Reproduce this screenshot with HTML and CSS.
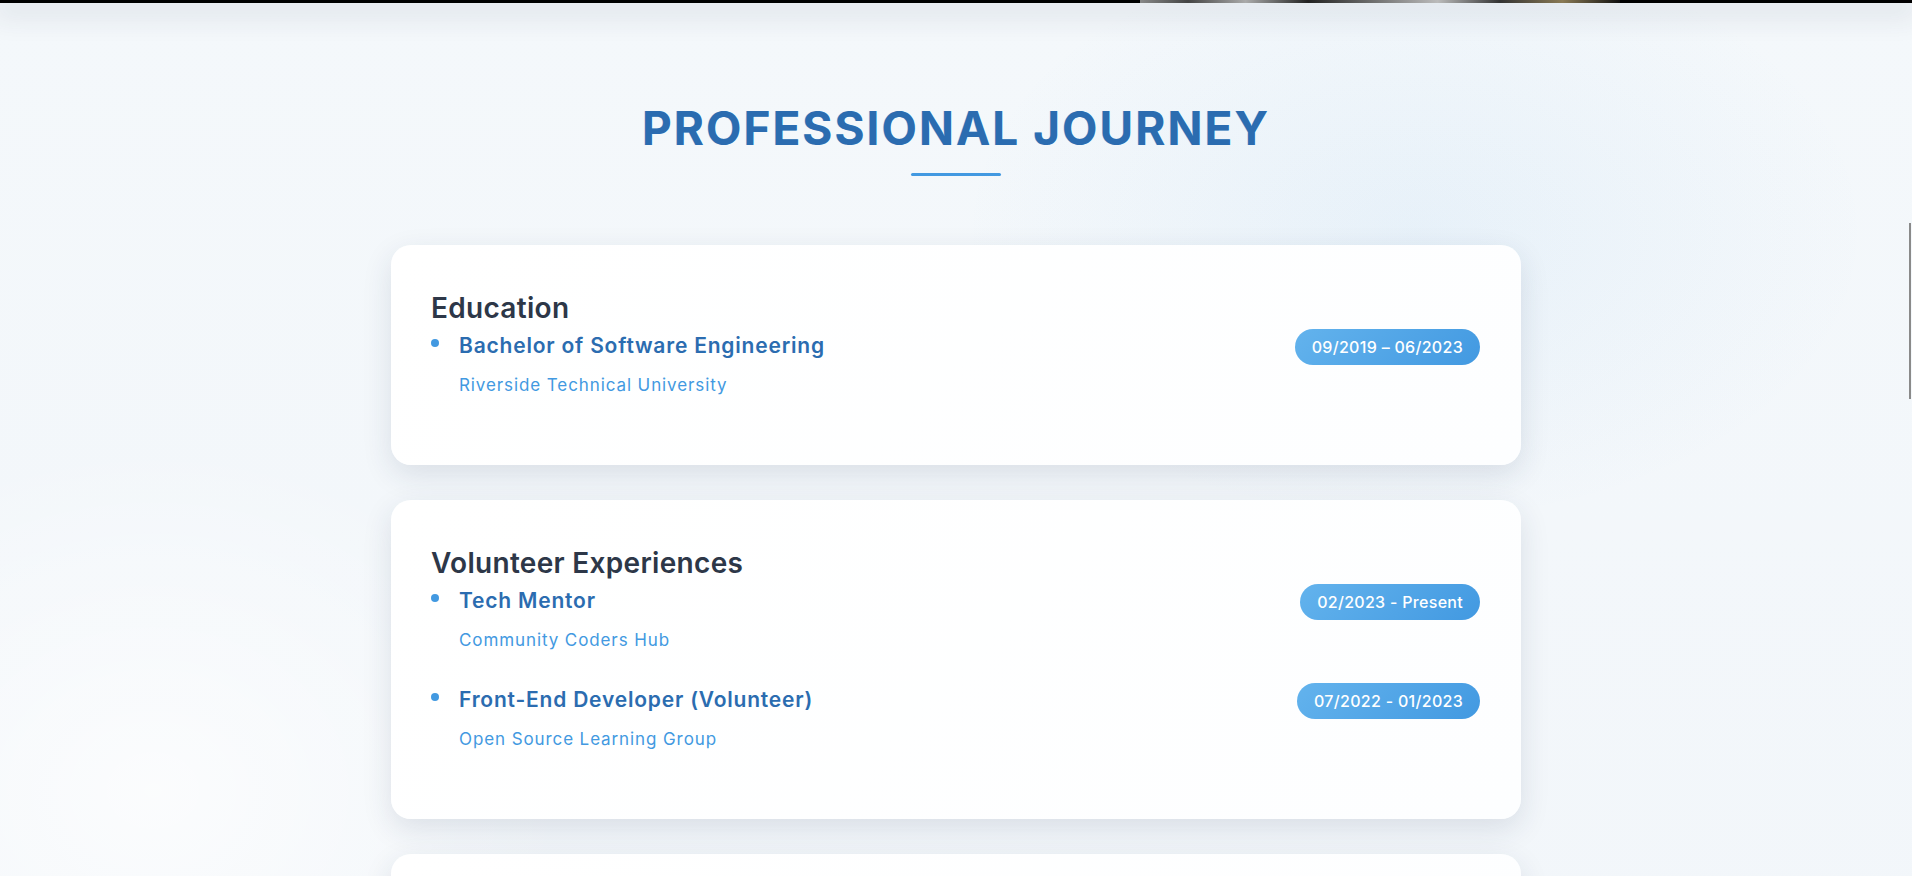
FILE: index.html
```html
<!DOCTYPE html>
<html lang="en">
<head>
<meta charset="utf-8">
<title>Professional Journey</title>
<link rel="stylesheet" href="styles.css">
</head>
<body>
<div class="hero-edge">
  <div class="hero-photo"></div>
</div>
<section class="journey">
  <h2 class="journey-title">PROFESSIONAL JOURNEY</h2>
  <div class="journey-rule"></div>

  <div class="card">
    <h3 class="card-title">Education</h3>
    <div class="item">
      <span class="bullet"></span>
      <div class="item-text">
        <div class="item-name">Bachelor of Software Engineering</div>
        <div class="item-org">Riverside Technical University</div>
      </div>
      <span class="badge">09/2019 – 06/2023</span>
    </div>
  </div>

  <div class="card">
    <h3 class="card-title">Volunteer Experiences</h3>
    <div class="item">
      <span class="bullet"></span>
      <div class="item-text">
        <div class="item-name">Tech Mentor</div>
        <div class="item-org">Community Coders Hub</div>
      </div>
      <span class="badge">02/2023 - Present</span>
    </div>
    <div class="item">
      <span class="bullet"></span>
      <div class="item-text">
        <div class="item-name">Front-End Developer (Volunteer)</div>
        <div class="item-org">Open Source Learning Group</div>
      </div>
      <span class="badge">07/2022 - 01/2023</span>
    </div>
  </div>

  <div class="card card-empty"></div>
</section>
<div class="scroll-thumb"></div>
</body>
</html>
```

FILE: styles.css
```css
* { box-sizing: border-box; }

html, body {
  margin: 0;
  padding: 0;
}

body {
  font-family: "Inter", "Open Sans", "Liberation Sans", sans-serif;
  background:
    radial-gradient(ellipse 650px 420px at 74% 22%, rgba(66, 153, 225, 0.07), rgba(66, 153, 225, 0) 70%),
    radial-gradient(ellipse 600px 500px at 8% 75%, rgba(255, 255, 255, 0.7), rgba(255, 255, 255, 0) 70%),
    linear-gradient(180deg, #f4f8fb 0%, #f2f6fa 100%);
  min-height: 876px;
  overflow: hidden;
}

.hero-edge {
  height: 3px;
  background: #000;
  display: flex;
  box-shadow: 0 6px 28px 8px rgba(40, 50, 70, 0.11);
}

.hero-photo {
  margin-left: 1140px;
  width: 480px;
  height: 3px;
  background: linear-gradient(90deg, #888 0%, #444 10%, #aaa 22%, #222 35%, #777 50%, #bbb 62%, #333 75%, #8a7a55 88%, #111 100%);
}

.journey {
  display: flex;
  flex-direction: column;
  align-items: center;
  padding-top: 98px;
}

.journey-title {
  margin: 0;
  font-size: 46px;
  line-height: 55px;
  font-weight: 700;
  letter-spacing: 2px;
  color: #2b6cb0;
  text-shadow: -0.5px 0 0 rgba(99, 179, 237, 0.5);
}

.journey-rule {
  width: 90px;
  height: 3px;
  margin-top: 17px;
  background: #4299e1;
  border-radius: 2px;
}

.card {
  width: 1130px;
  margin-top: 69px;
  padding: 45px 41px 34px 40px;
  background: linear-gradient(135deg, #ffffff 0%, #fdfeff 100%);
  border-radius: 20px;
  box-shadow: 0 10px 30px rgba(30, 50, 85, 0.12);
}

.card + .card {
  margin-top: 35px;
}

.card-empty {
  height: 200px;
}

.card-title {
  margin: 0 0 6px;
  font-size: 28px;
  line-height: 36px;
  font-weight: 600;
  letter-spacing: 0.3px;
  color: #2d3748;
}

.item {
  display: flex;
  align-items: flex-start;
  margin-bottom: 34px;
}

.bullet {
  flex: none;
  width: 8px;
  height: 8px;
  margin-top: 7px;
  margin-right: 20px;
  border-radius: 50%;
  background: #4299e1;
}

.item-text {
  flex: 1;
}

.item-name {
  font-size: 21px;
  line-height: 28px;
  font-weight: 600;
  letter-spacing: 0.8px;
  color: #2b6cb0;
}

.item-org {
  margin-top: 13px;
  font-size: 17px;
  line-height: 24px;
  font-weight: 400;
  letter-spacing: 0.9px;
  color: #4299e1;
}

.badge {
  flex: none;
  margin-top: -3px;
  padding: 0 17px;
  height: 36px;
  line-height: 36px;
  border-radius: 18px;
  font-size: 16px;
  font-weight: 500;
  letter-spacing: 0.3px;
  color: #ffffff;
  background: linear-gradient(135deg, #63b3ed 0%, #4299e1 100%);
}

.scroll-thumb {
  position: fixed;
  top: 223px;
  right: 1px;
  width: 2px;
  height: 176px;
  background: #8a8a8a;
}
```
